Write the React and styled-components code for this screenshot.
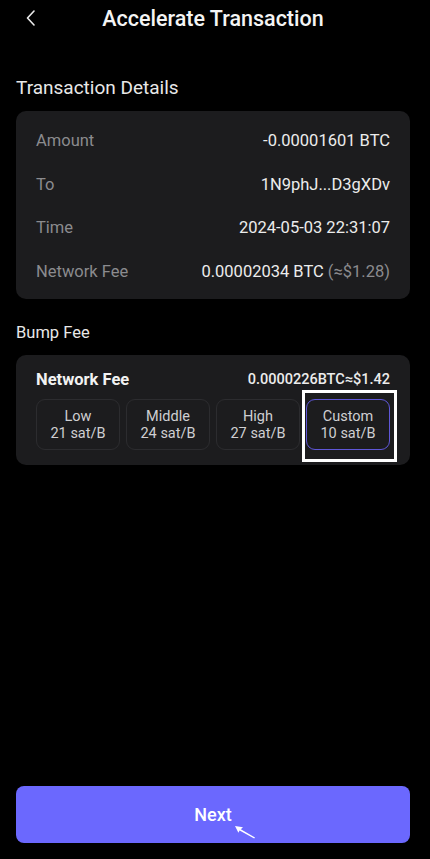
import React from 'react'
import styled, { createGlobalStyle } from 'styled-components'

const GlobalStyle = createGlobalStyle`
  html, body {
    margin: 0;
    padding: 0;
    background: #000;
  }
  body {
    font-family: Roboto, "Noto Sans", "Liberation Sans", sans-serif;
    color: #f2f2f2;
  }
`;

const Page = styled.div`
  min-height: 859px;
  box-sizing: border-box;
  padding: 0 20px 16px 16px;
  display: flex;
  flex-direction: column;
`;

const Header = styled.div`
  height: 36px;
  display: grid;
  grid-template-columns: 1fr auto 1fr;
  align-items: center;
`;

const Back = styled.button`
  justify-self: start;
  background: none;
  border: 0;
  padding: 0 0 0 10px;
  display: flex;
  color: #eaeaea;
  cursor: pointer;
`;

const Title = styled.h1`
  margin: 0;
  font-size: 21.5px;
  font-weight: 500;
  color: #f4f4f4;
`;

const SectionTitle = styled.h2`
  margin: ${p => p.$top}px 0 11px;
  font-size: ${p => p.$size}px;
  line-height: ${p => p.$line}px;
  font-weight: 400;
  color: #e8e8e8;
`;

const Card = styled.div`
  background: #1c1c1e;
  border-radius: 10px;
  padding: ${p => p.$pad};
`;

const Row = styled.div`
  height: 43.5px;
  display: flex;
  align-items: center;
  justify-content: space-between;
  font-size: 16.5px;
`;

const Label = styled.span`
  color: #8b8b8e;
`;

const Value = styled.span`
  color: #ececec;
`;

const Muted = styled.span`
  color: #8b8b8e;
`;

const FeeHead = styled.div`
  height: 20px;
  display: flex;
  align-items: center;
  justify-content: space-between;
  margin-bottom: 10px;
`;

const FeeLabel = styled.span`
  font-size: 16.5px;
  font-weight: 700;
  color: #f2f2f2;
`;

const FeeValue = styled.span`
  font-size: 14.5px;
  font-weight: 500;
  color: #ececec;
`;

const Options = styled.div`
  display: grid;
  grid-template-columns: repeat(4, 1fr);
  gap: 6px;
`;

const Option = styled.button`
  position: relative;
  height: 51px;
  box-sizing: border-box;
  border-radius: 9px;
  border: ${p => (p.$active ? '1.5px solid #5f57d8' : '1px solid #2c2c2f')};
  background: transparent;
  color: #cfcfd2;
  font-family: inherit;
  font-size: 14.5px;
  line-height: 17px;
  padding: 0;
  display: flex;
  flex-direction: column;
  align-items: center;
  justify-content: center;
`;

const Highlight = styled.span`
  position: absolute;
  left: -5.5px;
  right: -7.5px;
  top: -10.5px;
  bottom: -12.5px;
  border: 3px solid #fff;
  pointer-events: none;
`;

const Spacer = styled.div`
  flex: 1;
`;

const NextButton = styled.button`
  position: relative;
  height: 57px;
  border: 0;
  border-radius: 8px;
  background: #6b68fe;
  color: #fff;
  font-family: inherit;
  font-size: 18px;
  font-weight: 500;
  cursor: pointer;
`;

const Cursor = styled.svg`
  position: absolute;
  left: 218px;
  top: 39px;
`;

const details = [
  { label: 'Amount', value: '-0.00001601 BTC' },
  { label: 'To', value: '1N9phJ...D3gXDv' },
  { label: 'Time', value: '2024-05-03 22:31:07' },
  { label: 'Network Fee', value: '0.00002034 BTC', extra: ' (≈$1.28)' },
];

const fees = [
  { name: 'Low', rate: 21 },
  { name: 'Middle', rate: 24 },
  { name: 'High', rate: 27 },
  { name: 'Custom', rate: 10, active: true },
];

const App = () => (
  <>
    <GlobalStyle />
    <Page>
      <Header>
        <Back aria-label="Back">
          <svg width="9" height="16" viewBox="0 0 9 16" fill="none">
            <path d="M8 1L1.5 8L8 15" stroke="currentColor" strokeWidth="1.6" strokeLinecap="round" strokeLinejoin="round" />
          </svg>
        </Back>
        <Title>Accelerate Transaction</Title>
        <span />
      </Header>

      <SectionTitle $top={40} $size={19} $line={24}>Transaction Details</SectionTitle>
      <Card $pad="8px 20px 6px">
        {details.map(d => (
          <Row key={d.label}>
            <Label>{d.label}</Label>
            <Value>{d.value}{d.extra && <Muted>{d.extra}</Muted>}</Value>
          </Row>
        ))}
      </Card>

      <SectionTitle $top={23} $size={16.5} $line={22}>Bump Fee</SectionTitle>
      <Card $pad="14px 20px 15px">
        <FeeHead>
          <FeeLabel>Network Fee</FeeLabel>
          <FeeValue>0.0000226BTC≈$1.42</FeeValue>
        </FeeHead>
        <Options>
          {fees.map(f => (
            <Option key={f.name} $active={f.active}>
              <span>{f.name}</span>
              <span>{f.rate} sat/B</span>
              {f.active && <Highlight />}
            </Option>
          ))}
        </Options>
      </Card>

      <Spacer />
      <NextButton>
        Next
        <Cursor width="22" height="14" viewBox="0 0 22 14">
          <path d="M1 1L9 2.2L6.8 4.2L21 12.6L20.2 13.4L5.6 5.4L4.4 7.8Z" fill="#fff" />
        </Cursor>
      </NextButton>
    </Page>
  </>
);

export default App
